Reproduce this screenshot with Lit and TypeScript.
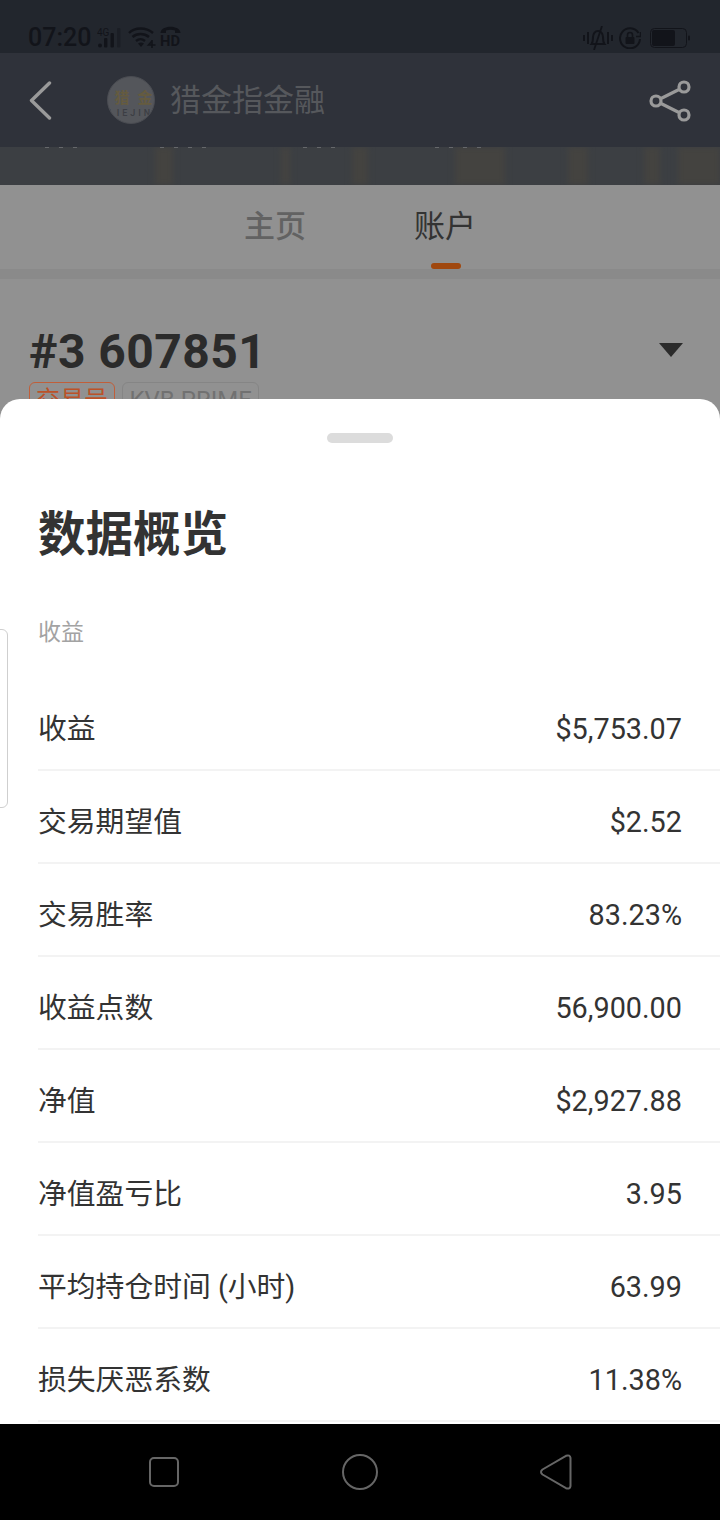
import { LitElement, html, css } from "lit";
import { customElement } from "lit/decorators.js";

const rows: [string, string][] = [
  ["收益", "$5,753.07"],
  ["交易期望值", "$2.52"],
  ["交易胜率", "83.23%"],
  ["收益点数", "56,900.00"],
  ["净值", "$2,927.88"],
  ["净值盈亏比", "3.95"],
  ["平均持仓时间 (小时)", "63.99"],
  ["损失厌恶系数", "11.38%"],
];

// Soft vertical smudges of the cover photo peeking out below the nav bar.
const smudges = [
  [155, 18], [281, 9], [352, 16], [455, 50], [568, 20], [644, 16], [678, 42],
];
// Bottoms of the white captions that the nav bar covers.
const peeks = [
  [45, 40], [160, 46], [303, 42], [435, 46],
];

@customElement("app-root")
export class AppRoot extends LitElement {
  static styles = css`
    :host {
      display: block;
      width: 720px;
      height: 1520px;
      overflow: hidden;
      background: #919191;
      font-family: Roboto, "Noto Sans CJK SC", sans-serif;
    }
    .back { height: 399px; overflow: hidden; display: flex; flex-direction: column; }
    .status {
      height: 53px; flex: none; background: #22262d; color: #12141a;
      display: flex; align-items: center; padding: 22px 30px 0 28px; box-sizing: border-box;
      justify-content: space-between;
    }
    .status .group { display: flex; align-items: center; }
    .time { font-size: 25px; font-weight: 500; line-height: 30px; margin-right: 6px; margin-top: 1px; }
    .nav {
      height: 94px; flex: none; background: #2f323a; display: flex; align-items: center;
      padding: 0 28px 0 28px; box-sizing: border-box; justify-content: space-between;
    }
    .nav .left { display: flex; align-items: center; }
    .logo {
      width: 48px; height: 48px; border-radius: 50%; background: #54565b; border: 1px solid #4a4c52;
      box-sizing: border-box; margin-left: 55px; margin-right: 15px; overflow: hidden;
      display: flex; flex-direction: column; align-items: center; justify-content: center;
      color: #655b3f; font-size: 15px; font-weight: 700; line-height: 20px; white-space: nowrap;
      padding-top: 5px;
    }
    .logo span { letter-spacing: 8px; margin-left: 13px; }
    .logo small { font-size: 9px; line-height: 10px; color: #3c3e44; letter-spacing: 3px; font-weight: 500; }
    .nav-title { font-size: 31px; color: #56585c; line-height: 40px; margin-top: 2px; }
    .photo { height: 38px; flex: none; background: #3c3f43; position: relative; overflow: hidden; }
    .smudge { position: absolute; top: 0; bottom: 0; background: #444340; filter: blur(3px); }
    .peek {
      position: absolute; top: 0; height: 1px;
      background: repeating-linear-gradient(90deg, #66686b 0 4px, transparent 4px 14px);
    }
    .tabs {
      height: 84px; flex: none; display: flex; justify-content: center; gap: 108px;
      box-sizing: border-box; padding-top: 22px;
    }
    .tab { font-size: 31px; line-height: 40px; color: #626262; font-weight: 500; position: relative; width: 62px; }
    .tab.on { color: #333; font-weight: 400; }
    .tab.on::after {
      content: ""; position: absolute; left: 17px; top: 56px; width: 30px; height: 6px;
      border-radius: 3px; background: #a0480f;
    }
    .rule { height: 10px; flex: none; background: #8a8a8a; }
    .acct { padding: 45px 37px 0 29px; display: flex; justify-content: space-between; }
    .acct-id { font-size: 48px; font-weight: 700; color: #2b2b2b; line-height: 56px; letter-spacing: 0.45px; }
    .caret { width: 24px; height: 14px; margin-top: 19px; fill: #2b2b2b; }
    .tags { display: flex; gap: 7px; padding: 2px 0 0 29px; }
    .tag {
      font-size: 24px; line-height: 30px; height: 40px; box-sizing: border-box; padding: 2px 6.5px;
      border: 1px solid #858585; border-radius: 6px; color: #717171;
    }
    .tag.red { border-color: #c05f3a; color: #bb5229; padding: 2px 6px; }

    .sheet {
      height: 1025px; flex: none; background: #fff; border-radius: 20px 20px 0 0;
      box-sizing: border-box; overflow: hidden; position: relative;
    }
    .handle { width: 66px; height: 10px; border-radius: 5px; background: #dcdcdc; margin: 34px auto 0; }
    h1 { margin: 60px 0 0 38px; font-size: 47.5px; line-height: 64px; font-weight: 700; color: #333; }
    .section { margin: 50px 0 0 38px; font-size: 23px; line-height: 32px; color: #a3a3a3; }
    .rows { margin: 29px 0 0 38px; }
    .row {
      height: 93px; box-sizing: border-box; border-bottom: 2px solid #f3f3f3;
      display: flex; align-items: center; justify-content: space-between;
      padding: 6px 38px 0 0; font-size: 28.8px; color: #333;
    }
    .value { padding-top: 4px; }
    .edge {
      position: absolute; left: -8px; top: 230px; width: 16px; height: 179px; box-sizing: border-box;
      border: 1px solid #cfcfcf; border-radius: 6px; background: #fff;
    }
    .softkeys {
      height: 96px; flex: none; background: #000; display: grid;
      grid-template-columns: repeat(3, 196px); justify-content: center; align-items: center;
    }
    .softkeys svg { justify-self: center; margin-top: -1px; }
    svg { display: block; }
  `;

  private statusLeft() {
    return html`
      <svg width="24" height="22" viewBox="0 0 24 22" fill="#12141a" style="margin-right:7px">
        <text x="0" y="9" font-size="10" font-family="Roboto">4G</text>
        <circle cx="3" cy="18.500" r="2"></circle>
        <rect x="7" y="11" width="3.400" height="9.500" rx="1"></rect>
        <rect x="13.500" y="6" width="3.400" height="14.500" rx="1"></rect>
        <rect x="20" y="1" width="3.400" height="19.500" rx="1" opacity=".4"></rect>
      </svg>
      <svg width="28" height="22" viewBox="0 0 28 22" fill="none" stroke="#12141a" stroke-width="2.400" style="margin-right:4px">
        <path d="M1 6 C7 0 18 0 25 6"></path>
        <path d="M4.500 10 C9 6 16 6 21 10"></path>
        <path d="M8 14 C11 11.500 14 11.500 17 14"></path>
        <path d="M13 20 l-3-3.500 c2-1.300 4-1.300 6 0z" fill="#12141a" stroke="none"></path>
        <path d="M24 14 l-3.500 4 h7 M24 13 v8" stroke-width="1.600"></path>
      </svg>
      <svg width="21" height="23" viewBox="0 0 21 23" fill="#12141a">
        <path d="M0.500 7 C0.500 -1.500 20.500 -1.500 20.500 7 L15 7 L15 4.500 C12 3.500 9 3.500 6 4.500 L6 7 Z"></path>
        <text x="0" y="20" font-size="14.500" font-weight="700" font-family="Roboto" textLength="20" lengthAdjust="spacingAndGlyphs">HD</text>
      </svg>
    `;
  }

  private statusRight() {
    return html`
      <svg width="30" height="24" viewBox="0 0 30 24" fill="none" stroke="#12141a" stroke-width="2" style="margin-right:6px">
        <path d="M1 9v6M5 6v12M25 6v12M29 9v6"></path>
        <path d="M8.500 18 c1.500-2 1.500-4 1.500-7 c0-3 2-6 5-6 c3 0 5 3 5 6 c0 3 0 5 1.500 7z"></path>
        <path d="M19 0 L11 24" stroke-width="1.800"></path>
      </svg>
      <svg width="22" height="22" viewBox="0 0 22 22" fill="none" stroke="#12141a" stroke-width="2" style="margin-right:9px">
        <path d="M19.500 6 A10 10 0 1 0 21 12"></path>
        <path d="M21.500 5 v4.500 h-4.500" stroke-width="1.500"></path>
        <rect x="6.500" y="10" width="9" height="7" rx="1" fill="#12141a" stroke="none"></rect>
        <path d="M8.500 10 V8 a2.500 2.500 0 0 1 5 0 V10" stroke-width="1.600"></path>
      </svg>
      <svg width="40" height="20" viewBox="0 0 40 20">
        <rect x=".5" y=".5" width="36" height="19" rx="4" fill="none" stroke="#12141a"></rect>
        <rect x="2" y="2" width="23" height="16" rx="2" fill="#12141a"></rect>
        <rect x="38" y="7.500" width="2" height="5" rx="1" fill="#12141a"></rect>
      </svg>
    `;
  }

  render() {
    return html`
      <div class="back">
        <div class="status">
          <div class="group"><span class="time">07:20</span>${this.statusLeft()}</div>
          <div class="group">${this.statusRight()}</div>
        </div>
        <div class="nav">
          <div class="left">
            <svg width="24" height="40" viewBox="0 0 24 40" fill="none" stroke="#9a9a9a" stroke-width="3.400" stroke-linecap="round" stroke-linejoin="round">
              <path d="M21.500 3 L3.500 20.500 L21.500 38"></path>
            </svg>
            <div class="logo"><span>猎金</span><small>LIEJIN</small></div>
            <div class="nav-title">猎金指金融</div>
          </div>
          <svg width="44" height="44" viewBox="0 0 44 44" fill="none" stroke="#9a9a9a" stroke-width="3.200">
            <circle cx="36" cy="9" r="5"></circle>
            <circle cx="8" cy="23" r="5"></circle>
            <circle cx="36" cy="37" r="5"></circle>
            <path d="M12.500 20.700 L31.500 11.300 M12.500 25.300 L31.500 34.700"></path>
          </svg>
        </div>
        <div class="photo">
          ${smudges.map(([x, w]) => html`<div class="smudge" style="left:${x}px;width:${w}px"></div>`)}
          ${peeks.map(([x, w]) => html`<div class="peek" style="left:${x}px;width:${w}px"></div>`)}
        </div>
        <div class="tabs">
          <div class="tab">主页</div>
          <div class="tab on">账户</div>
        </div>
        <div class="rule"></div>
        <div class="acct">
          <div class="acct-id">#3 607851</div>
          <svg class="caret" viewBox="0 0 24 14"><path d="M0 0H24L12 14Z"></path></svg>
        </div>
        <div class="tags">
          <div class="tag red">交易号</div>
          <div class="tag">KVB PRIME</div>
        </div>
      </div>
      <div class="sheet">
        <div class="edge"></div>
        <div class="handle"></div>
        <h1>数据概览</h1>
        <div class="section">收益</div>
        <div class="rows">
          ${rows.map(([k, v]) => html`<div class="row"><span>${k}</span><span class="value">${v}</span></div>`)}
        </div>
      </div>
      <div class="softkeys">
        <svg width="30" height="30" viewBox="0 0 30 30" fill="none" stroke="#666" stroke-width="2"><rect x="1" y="1" width="28" height="28" rx="4"></rect></svg>
        <svg width="36" height="36" viewBox="0 0 36 36" fill="none" stroke="#666" stroke-width="2"><circle cx="18" cy="18" r="17"></circle></svg>
        <svg width="32" height="36" viewBox="0 0 32 36" fill="none" stroke="#666" stroke-width="2" stroke-linejoin="round"><path d="M2.500 15.500 L26 1.800 Q30 0.500 30.500 4 V32 Q30 35.500 26 34.200 L2.500 20.500 Q-.5 18 2.500 15.500Z"></path></svg>
      </div>
    `;
  }
}
